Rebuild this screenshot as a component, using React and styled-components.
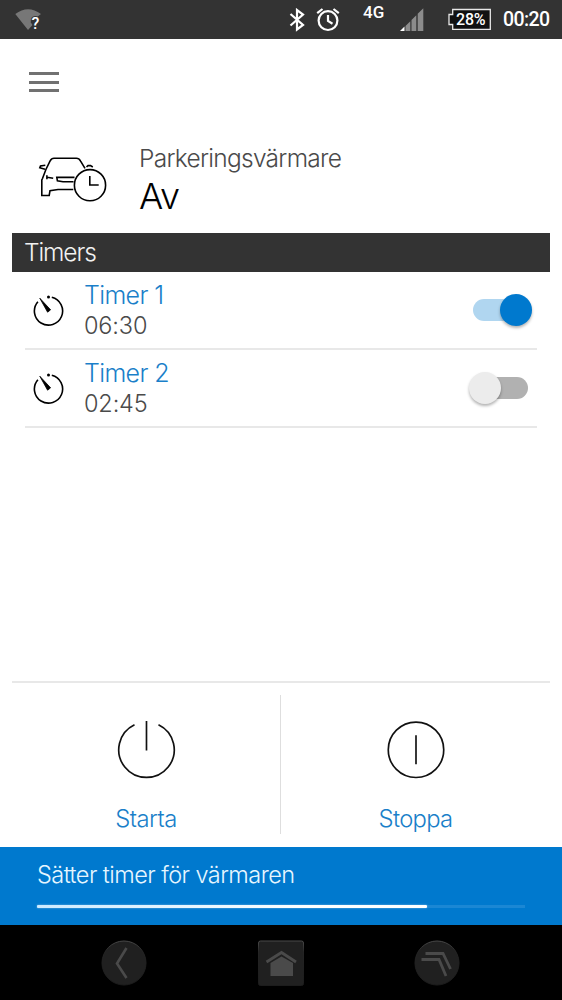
import React from "react";
import styled, { createGlobalStyle } from "styled-components";

const BLUE = "#0079ce";
const LINK = "#1a7fc9";

const GlobalStyle = createGlobalStyle`
  * { box-sizing: border-box; }
  body { margin: 0; background: #fff; }
`;

const Screen = styled.div`
  width: 562px;
  height: 1000px;
  display: flex;
  flex-direction: column;
  background: #fff;
  overflow: hidden;
  font-family: Inter, "Liberation Sans", sans-serif;
  font-weight: 300;
`;

const StatusBar = styled.header`
  height: 39px;
  flex: none;
  display: flex;
  align-items: flex-start;
  padding: 8px 12px 0 15px;
  background: #333;
  color: #fff;
  font-family: Roboto, sans-serif;
  font-weight: 500;
`;

const StatusIcon = styled.svg`
  flex: none;
  display: block;
  margin-left: ${(p) => p.$gap || 0}px;
`;

const StatusSpacer = styled.div`
  flex: 1;
`;

const Network = styled.span`
  width: 22px;
  margin: -6px 0 0 23px;
  font-size: 17px;
  line-height: 20px;
`;

const Battery = styled.div`
  position: relative;
  width: 43px;
  height: 23px;
  margin-left: 24px;
`;

const BatteryText = styled.span`
  position: absolute;
  left: 8px;
  top: 2px;
  font-size: 16px;
  line-height: 19px;
  letter-spacing: -0.2px;
`;

const Clock = styled.time`
  width: 47px;
  margin-left: 12px;
  font-size: 19.5px;
  line-height: 24px;
  letter-spacing: -0.6px;
  white-space: nowrap;
`;

const Toolbar = styled.nav`
  height: 86px;
  flex: none;
  padding: 33px 29px 0;
`;

const MenuButton = styled.button`
  display: flex;
  flex-direction: column;
  gap: 5.6px;
  width: 30px;
  padding: 0;
  border: 0;
  background: none;
`;

const MenuLine = styled.span`
  height: 3px;
  background: #717171;
`;

const Label = styled.span`
  display: block;
  white-space: nowrap;
  color: ${(p) => p.$color};
  font-size: ${(p) => p.$size}px;
  line-height: ${(p) => p.$line || 30}px;
  letter-spacing: ${(p) => p.$track || 0}px;
`;

const Summary = styled.section`
  height: 108px;
  flex: none;
  display: flex;
  padding: 18px 0 0 36px;
`;

const CarIcon = styled.svg`
  flex: none;
  margin: 10px 31px 0 0;
`;

const SectionTitle = styled.h2`
  height: 39px;
  flex: none;
  margin: 0 12px;
  padding: 4px 12px 0;
  background: #333;
  font-weight: 300;
`;

const TimerRow = styled.div`
  height: 78px;
  flex: none;
  display: flex;
  margin: 0 25px;
  padding-top: 8px;
  border-bottom: 2px solid #e8e8e8;
`;

const TimerIcon = styled.svg`
  margin: 13px 18px 0 7px;
  flex: none;
`;

const TimerText = styled.div`
  flex: 1;
`;

const Switch = styled.button`
  position: relative;
  width: 55px;
  height: 22px;
  margin: 19px 9px 0 0;
  padding: 0;
  border: 0;
  border-radius: 11px;
  background: ${(p) => (p.$on ? "#b0d6f0" : "#b1b1b1")};
`;

const Thumb = styled.span`
  position: absolute;
  top: -5px;
  left: ${(p) => (p.$on ? 27 : -4)}px;
  width: 32px;
  height: 32px;
  border-radius: 50%;
  background: ${(p) => (p.$on ? BLUE : "#ececec")};
  box-shadow: 0 2px 3px rgba(0, 0, 0, 0.3);
`;

const Actions = styled.section`
  height: 166px;
  flex: none;
  display: flex;
  margin: auto 12px 0;
  padding-top: 12px;
  border-top: 2px solid #e8e8e8;
`;

const Action = styled.button`
  width: 269px;
  height: 139px;
  display: flex;
  flex-direction: column;
  align-items: center;
  padding: 25px 0 0;
  border: 0;
  border-right: ${(p) => (p.$divided ? "1px solid #dedede" : "0")};
  background: none;
  font: inherit;
`;

const ActionIcon = styled.svg`
  display: block;
  margin-bottom: 25px;
`;

const Progress = styled.section`
  height: 78px;
  flex: none;
  padding: 13px 37px 0;
  background: ${BLUE};
`;

const Track = styled.div`
  width: 488px;
  height: 3px;
  margin-top: 15px;
  background: #1b87d4;
`;

const Fill = styled.div`
  width: 80%;
  height: 3px;
  border-radius: 1px;
  background: linear-gradient(90deg, #cdeaff, #fff 70%);
  box-shadow: 0 0 2px rgba(255, 255, 255, 0.5);
`;

const NavBar = styled.footer`
  height: 75px;
  flex: none;
  display: flex;
  justify-content: space-between;
  padding: 14px 101px 0 100px;
  background: #000;
`;

const timers = [
  { name: "Timer 1", time: "06:30", on: true },
  { name: "Timer 2", time: "02:45", on: false },
];

function NavIcon({ children, square }) {
  return (
    <svg width="48" height="48" viewBox="0 0 48 48" fill="none">
      <defs>
        <linearGradient id="rim" x1="0" y1="0" x2="0" y2="1">
          <stop offset="0" stopColor="#4a4a4a" />
          <stop offset="0.25" stopColor="#242424" />
          <stop offset="1" stopColor="#1c1c1c" />
        </linearGradient>
      </defs>
      {square ? (
        <rect x="1.5" y="2" width="45" height="44.5" rx="2" fill="#202020" stroke="url(#rim)" />
      ) : (
        <circle cx="24" cy="24" r="22" fill="#202020" stroke="url(#rim)" />
      )}
      {children}
    </svg>
  );
}

export default function App() {
  return (
    <>
      <GlobalStyle />
      <Screen>
        <StatusBar>
          <StatusIcon width="28" height="24" viewBox="0 0 28 24">
            <path d="M0.3 6Q13 -3.5 26 6L22 9L18 10L15.5 14L17.5 17L13 22Z" fill="#777" />
            <text x="16.6" y="20.5" fontSize="16" fill="#fff" stroke="#333" strokeWidth="2" paintOrder="stroke">?</text>
          </StatusIcon>
          <StatusSpacer />
          <StatusIcon width="16" height="24" viewBox="0 0 16 24" fill="none" stroke="#fff" strokeWidth="2.2">
            <path d="M1.5 6L14 17L8 21.5V2L14 6.5L1.5 17.5" />
          </StatusIcon>
          <StatusIcon $gap={11} width="24" height="24" viewBox="0 0 24 24" fill="none" stroke="#fff" strokeWidth="2.2">
            <circle cx="12" cy="12.6" r="9.4" />
            <path d="M12 7V13L16.5 15.7M1.2 5.2L6.5 1M17.5 1L22.8 5.2" />
          </StatusIcon>
          <Network>4G</Network>
          <StatusIcon $gap={15} width="24" height="24" viewBox="0 0 24 24">
            <path d="M5.5 18L10.3 13.2V23H5.5ZM11.5 12L16.3 7.2V23H11.5ZM17.7 5.8L23.3 0.2V23H17.7Z" fill="#8c8c8c" />
            <path d="M0 23L4.5 18.5V23Z" fill="#fff" />
          </StatusIcon>
          <Battery>
            <svg width="43" height="23" viewBox="0 0 43 23" fill="#111" stroke="#e8e8e8" strokeWidth="1.3">
              <path d="M4.7 1.5H42.3V21.3H4.7V16.5H1V6.5H4.7Z" />
            </svg>
            <BatteryText>28%</BatteryText>
          </Battery>
          <Clock>00:20</Clock>
        </StatusBar>

        <Toolbar>
          <MenuButton aria-label="Meny">
            <MenuLine />
            <MenuLine />
            <MenuLine />
          </MenuButton>
        </Toolbar>

        <Summary>
          <CarIcon width="72" height="52" viewBox="0 0 72 52" fill="none" stroke="#000" strokeWidth="1.6">
            <path d="M49 15.3L44.6 8.2Q43 5.3 40.5 5.3H18Q15.5 5.3 14 8.2L9.9 16.5L6.5 25.5L5.8 27V42.5H13.2L14 37.6L22 36.5H37.3" />
            <path d="M9.3 12.2L4.5 13L3.8 14.8L9 16.3M50.5 14L52 12.6H54.5L56.8 14M10.9 22.3V26.2M11 24.3L17.2 25.3M38.5 24.4H20.8L21.4 27.8L27 28.8H37.5" />
            <circle cx="54" cy="32.2" r="15.6" />
            <path d="M53.8 23V32H62.7" />
          </CarIcon>
          <div>
            <Label $size={24.5} $color="#4a4a4a" $track={-0.72}>Parkeringsvärmare</Label>
            <Label $size={36} $color="#000" $line={46} $track={-0.7}>Av</Label>
          </div>
        </Summary>

        <SectionTitle>
          <Label $size={24.5} $color="#f2f2f2" $track={-1.1}>Timers</Label>
        </SectionTitle>
        {timers.map((t) => (
          <TimerRow key={t.name}>
            <TimerIcon width="34" height="34" viewBox="0 0 34 34" fill="none" stroke="#000" strokeWidth="1.6">
              <path d="M19.8 4.3A14.1 14.1 0 1 1 5.9 8.7" />
              <path d="M7.8 5.2L18.6 16.8L15.6 19.2Z" fill="#000" strokeWidth="0.8" strokeLinejoin="round" />
              <circle cx="16.5" cy="4.1" r="1.5" fill="#000" stroke="none" />
            </TimerIcon>
            <TimerText>
              <Label $size={25} $color={LINK} $line={30} $track={-0.65}>{t.name}</Label>
              <Label $size={23.5} $color="#4a4a4a" $line={32} $track={-0.15}>{t.time}</Label>
            </TimerText>
            <Switch $on={t.on} aria-label={t.name}>
              <Thumb $on={t.on} />
            </Switch>
          </TimerRow>
        ))}

        <Actions>
          <Action $divided>
            <ActionIcon width="60" height="60" viewBox="0 0 60 60" fill="none" stroke="#111" strokeWidth="1.7">
              <path d="M18.3 4.8A28.2 28.2 0 1 0 42.7 4.8M30.5 1V31" />
            </ActionIcon>
            <Label $size={23.8} $color={LINK} $track={-0.5}>Starta</Label>
          </Action>
          <Action>
            <ActionIcon width="60" height="60" viewBox="0 0 60 60" fill="none" stroke="#111" strokeWidth="1.7">
              <circle cx="30" cy="30.3" r="28.2" />
              <path d="M30 15.5V45" />
            </ActionIcon>
            <Label $size={23.8} $color={LINK} $track={-0.7}>Stoppa</Label>
          </Action>
        </Actions>

        <Progress>
          <Label $size={23.5} $color="#e6f6ff" $track={-0.55}>Sätter timer för värmaren</Label>
          <Track>
            <Fill />
          </Track>
        </Progress>

        <NavBar>
          <NavIcon>
            <path d="M26.5 9L17 24.5L26.5 39" stroke="#4a4a4a" strokeWidth="2.6" />
          </NavIcon>
          <NavIcon square>
            <path d="M9.5 23L24.5 13.5L39 23" stroke="#4a4a4a" strokeWidth="2.8" />
            <path d="M13.5 24L24.5 17.5L36 24V37H13.5Z" fill="#4a4a4a" />
          </NavIcon>
          <NavIcon>
            <path d="M12.5 14.5H30L37.5 30M8.5 20.5H26L33 37" stroke="#4a4a4a" strokeWidth="2.8" />
          </NavIcon>
        </NavBar>
      </Screen>
    </>
  );
}
